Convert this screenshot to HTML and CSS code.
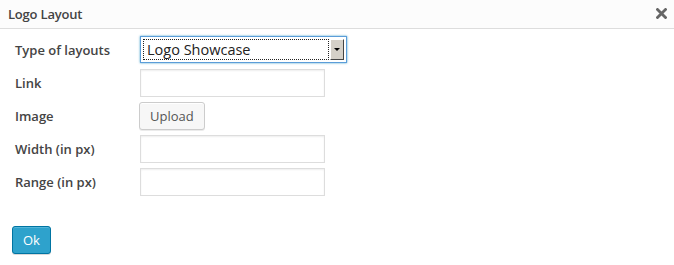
FILE: index.html
```html
<!DOCTYPE html>
<html lang="en">
<head>
  <meta charset="utf-8">
  <title>Logo Layout</title>
  <link rel="stylesheet" href="styles.css">
</head>
<body>

<div class="dialog">
  <div class="dialog-head">
    <span class="dialog-title">Logo Layout</span>
    <span class="dialog-close" title="Close">
      <svg width="11" height="11" viewBox="0 0 11 11"><path d="M1.5 1.5 L9.5 9.5 M9.5 1.5 L1.5 9.5" stroke="#666" stroke-width="2.8" stroke-linecap="square"/></svg>
    </span>
  </div>

  <div class="form">
    <label class="lbl">Type of layouts</label>
    <div class="field">
      <div class="select">
        <span class="select-text">Logo Showcase</span>
        <span class="select-arrow"></span>
      </div>
    </div>

    <label class="lbl">Link</label>
    <div class="field"><input class="txt" type="text"></div>

    <label class="lbl">Image</label>
    <div class="field"><button class="btn">Upload</button></div>

    <label class="lbl">Width (in px)</label>
    <div class="field"><input class="txt" type="text"></div>

    <label class="lbl">Range (in px)</label>
    <div class="field"><input class="txt" type="text"></div>
  </div>

  <div class="actions">
    <button class="btn btn-primary">Ok</button>
  </div>
</div>

</body>
</html>
```

FILE: styles.css
```css
body{margin:0;background:#fff;color:#333;
     font:13px/1.4 "Open Sans",sans-serif}
.dialog{width:674px;height:265px;background:#fff}
.dialog-head{height:28px;border-bottom:1px solid #ddd;background:#fcfcfc;
             display:flex;align-items:center;justify-content:space-between;
             padding:0 7px 0 8px}
.dialog-title{font-weight:600;font-size:13px;color:#444;letter-spacing:-.2px}
.dialog-close{display:flex;margin-top:-1px}
.form{display:grid;grid-template-columns:125px auto;grid-auto-rows:28px;row-gap:5px;
      padding:7px 0 0 15px;align-items:center}
.lbl{font-weight:600;color:#444}
.field{display:flex;align-self:start}
.select{width:207px;height:27px;box-sizing:border-box;border:1px solid #5b9dd9;
        box-shadow:0 0 2px rgba(30,140,190,.8);background:#fff;
        display:flex;align-items:center;padding:2px;gap:0}
.select-text{flex:1;height:100%;box-sizing:border-box;border:1px dotted #222;
             font-size:14.5px;line-height:20px;padding-left:3px;color:#222}
.select-arrow{width:14px;height:21px;margin-left:1px;box-sizing:border-box;
              background:#d4d0c8;border-top:1px solid #fff;border-left:1px solid #fff;
              border-right:1px solid #444;border-bottom:1px solid #444;position:relative}
.select-arrow::after{content:"";position:absolute;left:3px;top:8px;
                     border:3px solid transparent;border-top:3px solid #000;border-bottom:0}
.txt{width:185px;height:28px;box-sizing:border-box;border:1px solid #ddd;
     box-shadow:inset 0 1px 2px rgba(0,0,0,.07);margin:0;padding:3px 5px;
     font:inherit}
.btn{height:28px;padding:0 10px;border:1px solid #ccc;border-radius:3px;
     background:#f7f7f7;color:#555;font:13px "Open Sans",sans-serif;
     box-shadow:inset 0 1px 0 #fff,0 1px 0 rgba(0,0,0,.08);margin-left:-1px}
.actions{padding:30px 0 0 12px}
.btn-primary{background:#2ea2cc;border-color:#0074a2;color:#fff;
             padding:0 10px;margin:0;
             box-shadow:inset 0 1px 0 rgba(120,200,230,.5),0 1px 0 rgba(0,0,0,.15)}
```
